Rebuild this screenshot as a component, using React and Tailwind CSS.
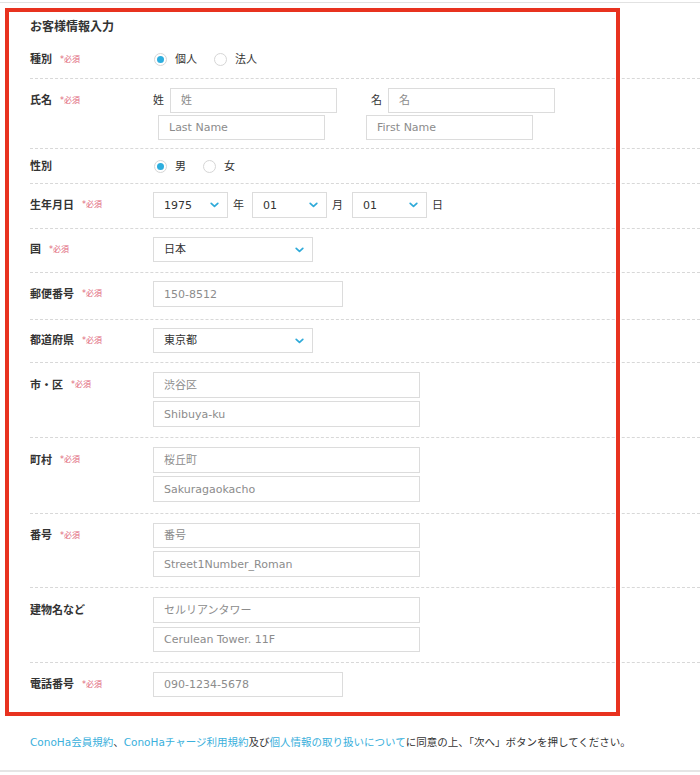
import React from "react";

function Chevron() {
  return (
    <svg width="9" height="6" viewBox="0 0 9 6" className="shrink-0">
      <path d="M1.2 1.3 L4.5 4.4 L7.8 1.3" fill="none" stroke="#2eaad9" strokeWidth="1.7" strokeLinecap="round" strokeLinejoin="round" />
    </svg>
  );
}

function Input({ size, dark, children }) {
  return (
    <div
      className={`flex items-center border border-[#dcdcdc] bg-white pl-[10px] text-[11px] leading-none ${size} ${
        dark ? "text-[#333]" : "text-[#8c8c8c]"
      }`}
    >
      {children}
    </div>
  );
}

function Select({ size, children }) {
  return (
    <div
      className={`flex items-center justify-between border border-[#dcdcdc] bg-white pl-[10px] pr-[8px] text-[11px] leading-none text-[#333] ${size}`}
    >
      <span>{children}</span>
      <Chevron />
    </div>
  );
}

function Radio({ checked, label }) {
  return (
    <div className="flex items-center gap-[8px]">
      <span className="flex h-[13px] w-[13px] items-center justify-center rounded-full border border-[#d6d6d6] bg-white">
        {checked && <span className="h-[7px] w-[7px] rounded-full bg-[#2eaede]" />}
      </span>
      <span className="text-[11px] leading-none text-[#333]">{label}</span>
    </div>
  );
}

function Row({ label, req, rowClass, labelClass, last, children }) {
  return (
    <div className={`flex ${rowClass} ${last ? "" : "border-b border-dashed border-[#d8d8d8]"}`}>
      <div className={`flex w-[123px] shrink-0 items-center ${labelClass || ""}`}>
        <span className="text-[11px] font-bold leading-none text-[#333]">{label}</span>
        {req && <span className="ml-[8px] text-[8px] leading-none text-[#e0667a]">*必須</span>}
      </div>
      <div className="flex flex-col">{children}</div>
    </div>
  );
}

export default function App() {
  return (
    <div className="relative h-[775px] w-[700px] overflow-hidden bg-white font-[family-name:'DejaVu_Sans','Noto_Sans_CJK_JP',sans-serif] text-[#333]">
      <div className="pt-[2px]">
        <div className="h-px bg-[#e2e2e2]" />
      </div>

      <div className="pl-[30px]">
        <div className="mb-[6px] mt-[16px] text-[12px] font-bold leading-[16px] text-[#333]">お客様情報入力</div>

        <Row label="種別" req rowClass="h-[38px] items-center">
          <div className="ml-px flex items-center gap-[17px]">
            <Radio checked label="個人" />
            <Radio label="法人" />
          </div>
        </Row>

        <Row label="氏名" req rowClass="pt-[9px] pb-[8px]" labelClass="h-[25px]">
          <div className="flex">
            <div className="flex w-[213px] flex-col gap-[2px]">
              <div className="flex items-center">
                <span className="w-[17px] text-[11px] leading-none text-[#333]">姓</span>
                <Input size="w-[167px] h-[25px]">姓</Input>
              </div>
              <div className="ml-[5px]">
                <Input size="w-[167px] h-[25px]">Last Name</Input>
              </div>
            </div>
            <div className="flex flex-col gap-[2px]">
              <div className="ml-[5px] flex items-center">
                <span className="w-[17px] text-[11px] leading-none text-[#333]">名</span>
                <Input size="w-[167px] h-[25px]">名</Input>
              </div>
              <div>
                <Input size="w-[167px] h-[25px]">First Name</Input>
              </div>
            </div>
          </div>
        </Row>

        <Row label="性別" rowClass="h-[35px] items-center">
          <div className="ml-px flex items-center gap-[17px]">
            <Radio checked label="男" />
            <Radio label="女" />
          </div>
        </Row>

        <Row label="生年月日" req rowClass="pt-[8px] pb-[10px]" labelClass="h-[26px]">
          <div className="flex items-center text-[11px] leading-none text-[#333]">
            <Select size="w-[75px] h-[26px]">1975</Select>
            <span className="w-[24px] pl-[5px]">年</span>
            <Select size="w-[75px] h-[26px]">01</Select>
            <span className="w-[25px] pl-[5px]">月</span>
            <Select size="w-[75px] h-[26px]">01</Select>
            <span className="pl-[5px]">日</span>
          </div>
        </Row>

        <Row label="国" req rowClass="pt-[8px] pb-[10px]" labelClass="h-[25px]">
          <Select size="w-[160px] h-[25px]">日本</Select>
        </Row>

        <Row label="郵便番号" req rowClass="pt-[8px] pb-[12px]" labelClass="h-[26px]">
          <Input size="w-[190px] h-[26px]">150-8512</Input>
        </Row>

        <Row label="都道府県" req rowClass="pt-[8px] pb-[9px]" labelClass="h-[25px]">
          <Select size="w-[160px] h-[25px]">東京都</Select>
        </Row>

        <Row label="市・区" req rowClass="pt-[9px] pb-[10px]" labelClass="h-[26px]">
          <div className="flex flex-col gap-[3px]">
            <Input size="w-[267px] h-[26px]">渋谷区</Input>
            <Input size="w-[267px] h-[26px]">Shibuya-ku</Input>
          </div>
        </Row>

        <Row label="町村" req rowClass="pt-[9px] pb-[11px]" labelClass="h-[26px]">
          <div className="flex flex-col gap-[3px]">
            <Input size="w-[267px] h-[26px]">桜丘町</Input>
            <Input size="w-[267px] h-[26px]">Sakuragaokacho</Input>
          </div>
        </Row>

        <Row label="番号" req rowClass="pt-[9px] pb-[10px]" labelClass="h-[25px]">
          <div className="flex flex-col gap-[3px]">
            <Input size="w-[267px] h-[25px]">番号</Input>
            <Input size="w-[267px] h-[26px]">Street1Number_Roman</Input>
          </div>
        </Row>

        <Row label="建物名など" rowClass="pt-[9px] pb-[10px]" labelClass="h-[26px]">
          <div className="flex flex-col gap-[4px]">
            <Input size="w-[267px] h-[26px]">セルリアンタワー</Input>
            <Input size="w-[267px] h-[25px]">Cerulean Tower. 11F</Input>
          </div>
        </Row>

        <Row label="電話番号" req rowClass="pt-[9px]" labelClass="h-[25px]" last>
          <Input size="w-[190px] h-[25px]">090-1234-5678</Input>
        </Row>

        <div className="mt-[37px] text-[10.5px] leading-[16px] text-[#333]">
          <span className="text-[#3ab0dc]">ConoHa会員規約</span>
          <span>、</span>
          <span className="text-[#3ab0dc]">ConoHaチャージ利用規約</span>
          <span>及び</span>
          <span className="text-[#3ab0dc]">個人情報の取り扱いについて</span>
          <span>に同意の上、「次へ」ボタンを押してください。</span>
        </div>
      </div>

      <div className="mt-[20px] h-[2px] bg-[#e5e5e5]" />

      <div className="pointer-events-none absolute left-[5px] top-[8px] h-[708px] w-[615px] border-[4px] border-[#e8321f]" />
    </div>
  );
}
